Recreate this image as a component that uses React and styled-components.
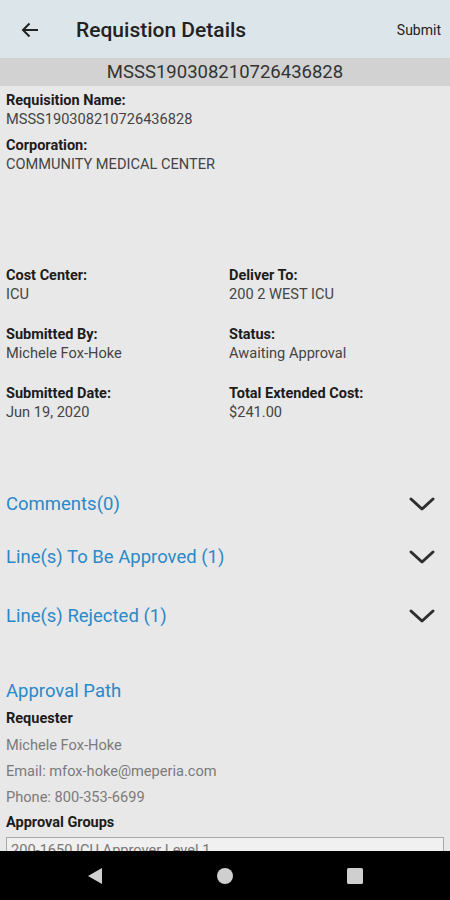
import React from "react";
import styled, { createGlobalStyle } from "styled-components";

const GlobalStyle = createGlobalStyle`
  html, body {
    margin: 0;
    padding: 0;
    background: #e8e8e8;
    font-family: Roboto, "Liberation Sans", sans-serif;
  }
`;

const Screen = styled.div`
  width: 450px;
  height: 900px;
  display: flex;
  flex-direction: column;
  background: #e8e8e8;
  overflow: hidden;
`;

const TopBar = styled.div`
  height: 58px;
  flex: 0 0 58px;
  display: flex;
  align-items: center;
  background: #dce6ea;
  padding: 2px 9px 0 20px;
  box-sizing: border-box;

  .back {
    width: 20px;
    height: 20px;
    display: flex;
  }
  .title {
    margin-left: 36px;
    font-size: 21px;
    font-weight: 500;
    color: #222;
  }
  .submit {
    margin-left: auto;
    font-size: 14px;
    color: #222;
  }
`;

const IdBar = styled.div`
  height: 28px;
  flex: 0 0 28px;
  display: flex;
  align-items: center;
  justify-content: center;
  background: #d2d2d2;
  font-size: 18.5px;
  color: #333;
`;

const Content = styled.div`
  flex: 1;
  overflow: hidden;
  padding: 6px 6px 0;
`;

const Field = styled.div`
  display: flex;
  flex-direction: column;
  margin-bottom: ${(p) => p.$gap || 0}px;
`;

const Label = styled.div`
  font-size: 14.5px;
  font-weight: 700;
  color: #1c1c1c;
  line-height: 18px;
`;

const Value = styled.div`
  font-size: 14.6px;
  color: #444;
  line-height: 19px;
`;

const Grid = styled.div`
  display: grid;
  grid-template-columns: 223px 1fr;
  row-gap: 22px;
  margin-top: 93px;
`;

const Sections = styled.div`
  margin-top: 67px;
  display: flex;
  flex-direction: column;
`;

const SectionRow = styled.div`
  display: flex;
  align-items: center;
  justify-content: space-between;
  height: ${(p) => p.$h}px;
  padding-right: 8px;

  span {
    font-size: 18.5px;
    color: #2b88c9;
  }
`;

const PathTitle = styled.div`
  margin-top: 42px;
  margin-bottom: 3px;
  font-size: 18.5px;
  color: #2b88c9;
  line-height: 24px;
`;

const SubHead = styled.div`
  font-size: 14.5px;
  font-weight: 700;
  color: #1c1c1c;
  line-height: 26px;
`;

const Info = styled.div`
  font-size: 14.6px;
  color: #7a7a7a;
  line-height: 26px;
`;

const GroupBox = styled.div`
  margin-top: 1px;
  border: 1px solid #a9a9a9;
  background: #f0f0f0;
  padding: 3px 4px;
  font-size: 14.6px;
  color: #777;
  height: 40px;
`;

const NavBar = styled.div`
  height: 49px;
  flex: 0 0 49px;
  background: #000;
  display: flex;
  align-items: center;
  justify-content: center;
  gap: 112px;
`;

const Chevron = () => (
  <svg width="28" height="18" viewBox="0 0 28 18">
    <path d="M3 4 L14 14 L25 4" fill="none" stroke="#2e2e2e" strokeWidth="3" strokeLinecap="round" strokeLinejoin="round" />
  </svg>
);

const sections = [
  { text: "Comments(0)", h: 30 },
  { text: "Line(s) To Be Approved (1)", h: 76 },
  { text: "Line(s) Rejected (1)", h: 42 },
];

const details = [
  ["Cost Center:", "ICU"],
  ["Deliver To:", "200 2 WEST ICU"],
  ["Submitted By:", "Michele Fox-Hoke"],
  ["Status:", "Awaiting Approval"],
  ["Submitted Date:", "Jun 19, 2020"],
  ["Total Extended Cost:", "$241.00"],
];

export default function App() {
  return (
    <Screen>
      <GlobalStyle />
      <TopBar>
        <span className="back">
          <svg width="20" height="20" viewBox="0 0 20 20">
            <path d="M18 10 H3 M9.5 3.5 L3 10 L9.5 16.5" fill="none" stroke="#222" strokeWidth="2" />
          </svg>
        </span>
        <span className="title">Requistion Details</span>
        <span className="submit">Submit</span>
      </TopBar>
      <IdBar>MSSS190308210726436828</IdBar>
      <Content>
        <Field $gap={8}>
          <Label>Requisition Name:</Label>
          <Value>MSSS190308210726436828</Value>
        </Field>
        <Field>
          <Label>Corporation:</Label>
          <Value>COMMUNITY MEDICAL CENTER</Value>
        </Field>
        <Grid>
          {details.map(([l, v]) => (
            <Field key={l}>
              <Label>{l}</Label>
              <Value>{v}</Value>
            </Field>
          ))}
        </Grid>
        <Sections>
          {sections.map((s) => (
            <SectionRow key={s.text} $h={s.h}>
              <span>{s.text}</span>
              <Chevron />
            </SectionRow>
          ))}
        </Sections>
        <PathTitle>Approval Path</PathTitle>
        <SubHead>Requester</SubHead>
        <Info>Michele Fox-Hoke</Info>
        <Info>Email: mfox-hoke@meperia.com</Info>
        <Info>Phone: 800-353-6699</Info>
        <SubHead>Approval Groups</SubHead>
        <GroupBox>200-1650 ICU Approver Level 1</GroupBox>
      </Content>
      <NavBar>
        <svg width="18" height="20" viewBox="0 0 18 20">
          <path d="M16 2 L2 10 L16 18 Z" fill="#cfcfcf" />
        </svg>
        <svg width="18" height="18" viewBox="0 0 18 18">
          <circle cx="9" cy="9" r="8" fill="#cfcfcf" />
        </svg>
        <svg width="18" height="18" viewBox="0 0 18 18">
          <rect x="1" y="1" width="16" height="16" rx="1.5" fill="#cfcfcf" />
        </svg>
      </NavBar>
    </Screen>
  );
}
